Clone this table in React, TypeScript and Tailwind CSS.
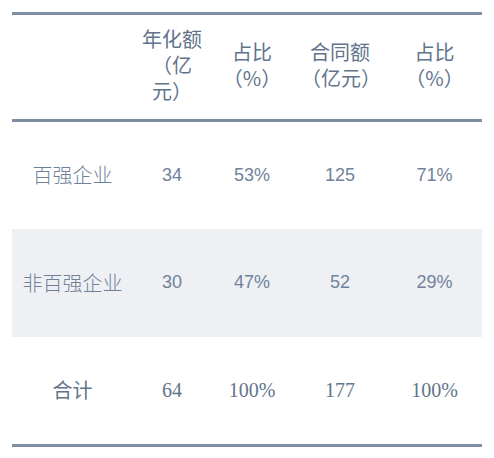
const rows = [
  { name: "百强企业", a: "34", b: "53%", c: "125", d: "71%", shaded: false },
  { name: "非百强企业", a: "30", b: "47%", c: "52", d: "29%", shaded: true },
];

const cjk = "font-['Noto_Sans_CJK_SC',sans-serif]";
const num = "font-['Liberation_Sans','Noto_Sans_CJK_SC',sans-serif]";

export default function App() {
  return (
    <div className="w-[494px] h-[458px] bg-white pt-3 px-3">
      <table className="w-[470px] table-fixed border-collapse text-[#71839a]">
        <colgroup>
          <col className="w-[121px]" />
          <col className="w-[78px]" />
          <col className="w-[82px]" />
          <col className="w-[94px]" />
          <col className="w-[95px]" />
        </colgroup>
        <thead>
          <tr className={`h-[107px] border-t-[3px] border-b-[3px] border-[#7e8fa2] ${cjk} text-[20px] leading-[26px] font-normal text-[#62748c]`}>
            <th />
            <th className="px-2 pb-1 text-center align-middle font-normal">年化额（亿元）</th>
            <th className="px-2 pb-1 text-center align-middle font-normal">占比（%）</th>
            <th className="px-2 pb-1 text-center align-middle font-normal">合同额（亿元）</th>
            <th className="px-2 pb-1 text-center align-middle font-normal">占比（%）</th>
          </tr>
        </thead>
        <tbody>
          {rows.map((r) => (
            <tr key={r.name} className={`h-[108px] text-[18px] ${r.shaded ? "bg-[#eef0f4]" : ""}`}>
              <td className={`text-center ${cjk} text-[20px] font-light text-[#6f8199]`}>{r.name}</td>
              <td className={`text-center ${num}`}>{r.a}</td>
              <td className={`text-center ${num}`}>{r.b}</td>
              <td className={`text-center ${num}`}>{r.c}</td>
              <td className={`text-center ${num}`}>{r.d}</td>
            </tr>
          ))}
          <tr className="h-[109px] border-b-[3px] border-[#7e8fa2] text-[20px] font-['Liberation_Serif',serif] text-[#62748c]">
            <td className={`text-center ${cjk} text-[20px] font-normal`}>合计</td>
            <td className="text-center">64</td>
            <td className="text-center">100%</td>
            <td className="text-center">177</td>
            <td className="text-center">100%</td>
          </tr>
        </tbody>
      </table>
    </div>
  );
}
